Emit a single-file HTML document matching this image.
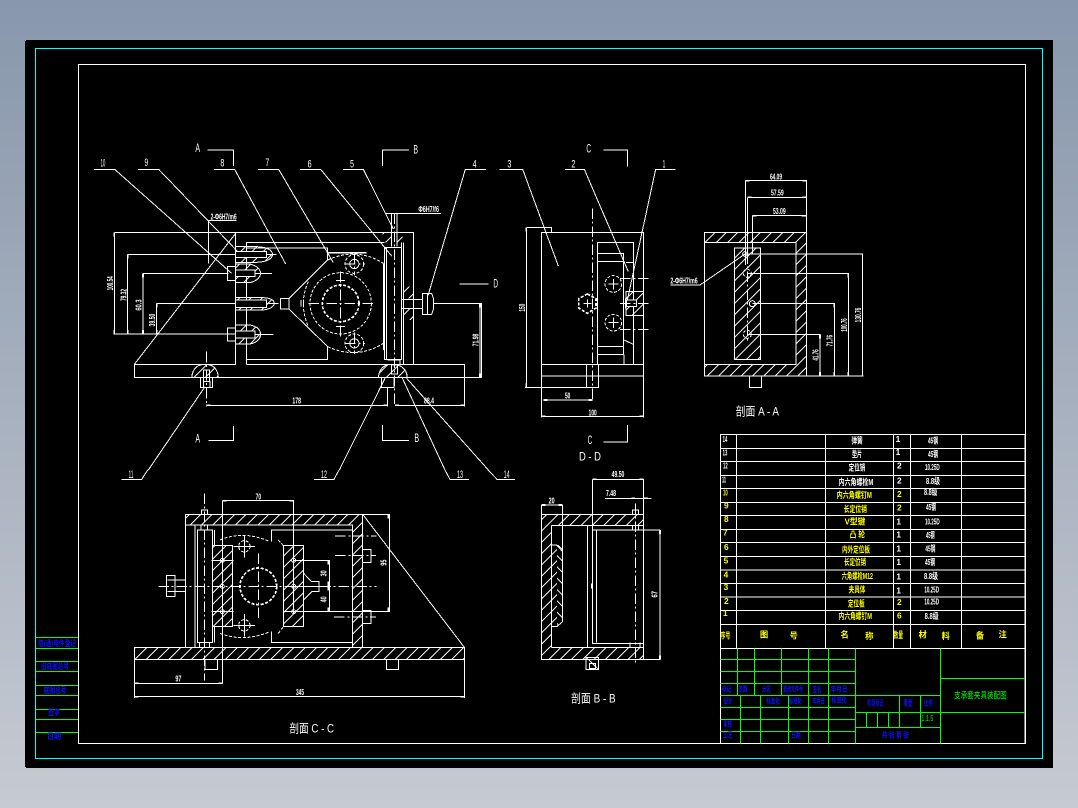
<!DOCTYPE html>
<html lang="zh"><head><meta charset="utf-8"><title>支承套夹具装配图</title>
<style>
html,body{margin:0;padding:0;width:1078px;height:808px;overflow:hidden;background:linear-gradient(#8897ac,#c6cad2)}
svg{position:absolute;left:0;top:0;display:block}
.l{fill:none;stroke:#fff;stroke-width:3;shape-rendering:crispEdges}
.c{stroke-dasharray:32 8 6 8}
.d{stroke-dasharray:9 5}
.k{stroke-width:5}
.h{fill:url(#hatch);stroke:none;shape-rendering:crispEdges}
.m{fill:url(#hatchB);stroke:none;shape-rendering:crispEdges}
text{font-family:"Liberation Sans","Noto Sans CJK SC","WenQuanYi Zen Hei",sans-serif;stroke:none;fill:#fff}
.s{font-size:25px;font-weight:700}
.n{font-size:32px}
.ti{font-size:36px;text-anchor:middle}
.mid{text-anchor:middle}
.y{fill:#ffff00}
.b{fill:#1010ff}
.g{fill:#00ff00}
.w{fill:#fff}
</style></head><body>
<svg width="1078" height="808" viewBox="0 0 1078 808" xmlns="http://www.w3.org/2000/svg">
<defs>
<pattern id="hatch" width="24" height="24" patternUnits="userSpaceOnUse" patternTransform="rotate(-45)"><rect width="24" height="3" fill="#fff"/></pattern>
<pattern id="hatchB" width="24" height="24" patternUnits="userSpaceOnUse" patternTransform="rotate(45)"><rect width="24" height="3" fill="#fff"/></pattern>
</defs>
<rect x="25" y="41" width="1" height="726" fill="#000"/>
<rect x="26" y="40" width="1027" height="728" fill="#000"/>
<rect x="35.5" y="48.5" width="1007" height="710" fill="none" stroke="#00ffff" shape-rendering="crispEdges"/>
<rect x="78.5" y="64.5" width="947" height="679" fill="none" stroke="#fff" shape-rendering="crispEdges"/>
<path d="M36 637.5H78M36 648.5H78M36 661.5H78M36 671.5H78M36 685.5H78M36 695.5H78M36 709.5H78M36 719.5H78M36 732.5H78" stroke="#00ff00" fill="none" shape-rendering="crispEdges"/>
<g font-size="8" style="font-weight:700">
<text class="b mid" x="57" y="646" textLength="38" lengthAdjust="spacingAndGlyphs">借(通)用件登记</text>
<text class="b mid" x="55" y="669" textLength="28" lengthAdjust="spacingAndGlyphs">旧底图总号</text>
<text class="b mid" x="55" y="693" textLength="23" lengthAdjust="spacingAndGlyphs">底图总号</text>
<text class="b mid" x="54" y="715" textLength="12" lengthAdjust="spacingAndGlyphs">签字</text>
<text class="b mid" x="54" y="739" textLength="14" lengthAdjust="spacingAndGlyphs">日期</text>
</g>

<!-- Main view -->
<g transform="translate(90 130) scale(.33333)">
<path class="l" d="M12 118H74L425 430M144 118H206L450 372M372 118H434L587 402M504 118H566L730 398M630 118H692L905 378M759 118H820L910 297M1188 118H1126L1014 497M1230 118H1262M345 770L175 1020M885 745L748 1020M935 740L1065 1020M950 745L1195 1020"/>
<path class="l" d="M352 60H430V108M877 108V60H957M355 932H430V888M877 885V932H957M1108 462H1195"/>
<path class="l" d="M73 307H970V703H1124V742M133 703H437V307M133 703V742H1175M133 703L437 310M469 703H970M469 703V337H883M469 688H713V650M469 354H713V390"/>
<path class="l" d="M73 307V612M70 612H437M113 373V612H113M113 373H530M159 430H415M159 430V612M200 521H435M200 521V612M355 272H440M355 272V400"/>
<path class="l k" d="M73 307V319M73 600V612M113 373V385M113 600V612M159 430V442M159 600V612M200 521V533M200 600V612M1170 521V533M1170 730V742M350 826H362M880 826H893M915 826H927M1112 826H1124M713 368H830"/>
<path class="h" d="M437 350H500Q545 352 548 373Q545 395 500 397H437ZM437 402H480Q510 410 512 430Q510 450 480 458H437ZM437 503H520Q552 505 553 520Q552 535 520 540H437ZM437 585H480Q510 590 512 613Q510 636 480 642H437ZM878 307H905V337H878ZM921 307H938V337H921ZM940 470H970V505H940ZM940 535H970V570H940Z"/>
<path class="l" d="M437 350H500Q545 352 548 373Q545 395 500 397H437M437 402H480Q510 410 512 430Q510 450 480 458H437M437 503H520Q552 505 553 520Q552 535 520 540H437M437 585H480Q510 590 512 613Q510 636 480 642H437"/>
<path d="M437 365H530V382H437ZM437 420H495V440H437ZM437 510H530V532H437ZM437 603H495V624H437Z" fill="#000" stroke="#fff" stroke-width="3" shape-rendering="crispEdges"/>
<path class="l" d="M413 410H437V452H413ZM413 594H437V633H413ZM530 373H560M495 430H546M530 521H566M495 613H550"/>
<path class="l" d="M572 505H597V537H572ZM597 505L713 390M597 537L713 650M633 510V530M640 510V530"/>
<path class="l d" d="M713 390Q800 350 880 400M713 650Q800 690 880 640M655 455Q625 520 655 590"/>
<circle class="l d" cx="752" cy="520" r="92"/>
<circle class="l d k" cx="752" cy="520" r="55"/>
<circle class="l d" cx="793" cy="402" r="28"/><circle class="l" cx="793" cy="402" r="14"/>
<circle class="l d" cx="793" cy="640" r="28"/><circle class="l" cx="793" cy="640" r="14"/>
<path class="l c" d="M655 520H850M752 425V620M765 402H825M793 370V435M765 640H825M793 608V672"/>
<path class="l" d="M738 452H765M738 590H765"/>
<path class="l" d="M883 352H935V688H883ZM881 400V660M890 352V688M905 250V350M921 250V350M935 337V352M940 337V703M885 250H1053"/>
<path class="l c" d="M913 250V830"/>
<path class="l" d="M935 508H998V535H935ZM998 490H1025L1030 505V538L1025 553H998ZM1012 490V553M1030 521H1175V742M1170 521V742"/>
<path class="h" d="M305 742Q310 703 345 703Q382 703 385 742ZM865 742Q870 703 905 703Q948 703 952 742Z"/>
<path class="l" d="M305 742Q310 703 345 703Q382 703 385 742M865 742Q870 703 905 703Q948 703 952 742M332 742H368V773H332ZM340 755H360V773H340ZM340 720H358V755H340ZM875 742H912V773H875ZM905 705H922V732H905ZM893 690H930V705"/>
<path class="l c" d="M349 665V830"/>
<path class="l" d="M349 826H893M915 826H1124M1124 742V830M893 773V830"/>
<g>
<text class="n mid" x="39" y="110" textLength="14" lengthAdjust="spacingAndGlyphs">10</text>
<text class="n mid" x="169" y="108" textLength="11" lengthAdjust="spacingAndGlyphs">9</text>
<text class="n mid" x="397" y="110" textLength="12" lengthAdjust="spacingAndGlyphs">8</text>
<text class="n mid" x="532" y="108" textLength="11" lengthAdjust="spacingAndGlyphs">7</text>
<text class="n mid" x="659" y="112" textLength="12" lengthAdjust="spacingAndGlyphs">6</text>
<text class="n mid" x="786" y="112" textLength="12" lengthAdjust="spacingAndGlyphs">5</text>
<text class="n mid" x="1154" y="112" textLength="12" lengthAdjust="spacingAndGlyphs">4</text>
<text class="ti" x="323" y="66" textLength="14" lengthAdjust="spacingAndGlyphs">A</text>
<text class="ti" x="977" y="70" textLength="14" lengthAdjust="spacingAndGlyphs">B</text>
<text class="ti" x="323" y="938" textLength="14" lengthAdjust="spacingAndGlyphs">A</text>
<text class="ti" x="980" y="936" textLength="14" lengthAdjust="spacingAndGlyphs">B</text>
<text class="ti" x="1217" y="473" textLength="14" lengthAdjust="spacingAndGlyphs">D</text>
<text class="s" x="362" y="268" textLength="78" lengthAdjust="spacingAndGlyphs">2-Φ6H7/m6</text>
<text class="s" x="985" y="246" textLength="62" lengthAdjust="spacingAndGlyphs">Φ6H7/f6</text>
<text class="s" x="620" y="820" text-anchor="middle" textLength="26" lengthAdjust="spacingAndGlyphs">178</text>
<text class="s" x="1017" y="820" text-anchor="middle" textLength="30" lengthAdjust="spacingAndGlyphs">88.4</text>
<text class="s mid" transform="rotate(-90 69 460)" x="69" y="460" textLength="42" lengthAdjust="spacingAndGlyphs">100.54</text>
<text class="s mid" transform="rotate(-90 109 495)" x="109" y="495" textLength="36" lengthAdjust="spacingAndGlyphs">79.32</text>
<text class="s mid" transform="rotate(-90 155 525)" x="155" y="525" textLength="34" lengthAdjust="spacingAndGlyphs">60.3</text>
<text class="s mid" transform="rotate(-90 195 570)" x="195" y="570" textLength="38" lengthAdjust="spacingAndGlyphs">39.50</text>
<text class="s mid" transform="rotate(-90 1165 630)" x="1165" y="630" textLength="38" lengthAdjust="spacingAndGlyphs">71.98</text>
</g>
</g>

<!-- Side view + A-A -->
<g transform="translate(500 130) scale(.33333)">
<path class="l" d="M-2 118H68L175 408M195 118H253L385 425M527 118H467L380 520M310 60H382V110M310 936H382V885"/>
<path class="l" d="M124 307H430V738H124ZM124 703H430M124 738V862M430 738V862M124 859H430M79 292H155V307M79 292V772H296V703M75 772H124M260 703V772M130 810H278"/>
<path class="l k" d="M124 859H136M418 859H430M130 810H142M266 810H278M79 292V304M79 760V772M737 152H749M908 152H920M742 202H754M908 202H920M758 257H770M905 257H920M960 613V625M960 726V738M1003 521V533M1003 726V738M1045 430V442M1045 726V738"/>
<path class="l c" d="M278 235V815"/>
<path class="l" d="M292 703V337H400V703M292 673H370V370H292M292 395H370M292 650H370M400 397H378M400 643L372 630M372 673V703"/>
<path class="h" d="M378 484H430V556H378Z"/>
<path class="l" d="M378 484H430V556H378Z"/>
<path d="M380 510H410V530H380Z" fill="#000" stroke="#fff" stroke-width="3" shape-rendering="crispEdges"/>
<path class="l k" d="M377 505V535"/>
<circle class="l d" cx="340" cy="462" r="25"/><circle class="l d" cx="340" cy="578" r="25"/>
<path class="l c" d="M360 445H445M360 598H445M360 520H445"/>
<path class="l" d="M325 462H355M340 447V478M325 578H355M340 563V594M250 520H275M262 508V532"/>
<path class="l k d" d="M262 492L288 506V534L262 550L236 534V506Z"/>

<path class="h" d="M613 307H920V337H613ZM888 337H920V703H888ZM613 703H920V738H613ZM703 354H782V688H703Z"/>
<path class="l" d="M613 307H920V738H613ZM613 337H888V703H613M703 354H782V688H703ZM748 738H785V773H748Z"/>
<path class="l" d="M737 152H920V738M737 152V405M742 202H920M742 202V370M758 257H920M758 257V370M735 372H1088V738M742 430H1045V738M758 521H1003V738M742 613H960V738M920 738H1090M512 465H600L735 372"/>
<path class="l c" d="M742 370V640"/>
<circle class="l" cx="735" cy="372" r="7"/><circle class="l d" cx="742" cy="430" r="12"/><circle class="l" cx="757" cy="521" r="9"/><circle class="l d" cx="742" cy="613" r="12"/>
<g>
<text class="ti" x="266" y="68" textLength="14" lengthAdjust="spacingAndGlyphs">C</text>
<text class="ti" x="270" y="942" textLength="14" lengthAdjust="spacingAndGlyphs">C</text>
<text class="n mid" x="28" y="112" textLength="12" lengthAdjust="spacingAndGlyphs">3</text>
<text class="n mid" x="220" y="112" textLength="12" lengthAdjust="spacingAndGlyphs">2</text>
<text class="n mid" x="492" y="112" textLength="8" lengthAdjust="spacingAndGlyphs">1</text>
<text class="s mid" x="203" y="805" textLength="16" lengthAdjust="spacingAndGlyphs">50</text>
<text class="s mid" x="278" y="856" textLength="24" lengthAdjust="spacingAndGlyphs">100</text>
<text class="s mid" transform="rotate(-90 75 533)" x="75" y="533" textLength="24" lengthAdjust="spacingAndGlyphs">150</text>
<text class="s mid" x="552" y="461" textLength="82" lengthAdjust="spacingAndGlyphs">2-Φ6H7/m6</text>
<text class="s mid" x="828" y="148" textLength="36" lengthAdjust="spacingAndGlyphs">64.09</text>
<text class="s mid" x="832" y="196" textLength="38" lengthAdjust="spacingAndGlyphs">57.59</text>
<text class="s mid" x="838" y="252" textLength="38" lengthAdjust="spacingAndGlyphs">53.09</text>
<text class="s mid" transform="rotate(-90 956 675)" x="956" y="675" textLength="34" lengthAdjust="spacingAndGlyphs">41.76</text>
<text class="s mid" transform="rotate(-90 998 632)" x="998" y="632" textLength="34" lengthAdjust="spacingAndGlyphs">71.76</text>
<text class="s mid" transform="rotate(-90 1041 585)" x="1041" y="585" textLength="40" lengthAdjust="spacingAndGlyphs">100.76</text>
<text class="s mid" transform="rotate(-90 1083 555)" x="1083" y="555" textLength="44" lengthAdjust="spacingAndGlyphs">130.76</text>
<text class="ti" x="772" y="857" textLength="130" lengthAdjust="spacingAndGlyphs">剖面 A - A</text>
</g>
</g>

<!-- C-C -->
<g transform="translate(120 470) scale(.33333)">
<path class="l" d="M5 28H65L83 0M582 28H642L657 0M975 0L990 28H1047M1104 0L1131 28H1185"/>
<path class="h" d="M196 133H728V165H196ZM697 165H728V532H697ZM43 532H1033V568H43ZM278 227H338V470H278ZM490 227H551V470H490Z"/>
<path class="l" d="M196 133H728V532M196 133V532M196 165H697V532M225 165V532M43 532H1033V568H43ZM728 133L1033 532M43 568V684M1033 568V684M43 680H1033M43 640H307M307 92V640M307 92H521V430M728 133H808V424H521M521 272H628V424M521 349H628"/>
<path class="l k" d="M43 680H55M1021 680H1033M43 640H55M295 640H307M307 92H319M509 92H521M805 133V145M805 412V424M625 272V284M625 412V424M625 335V362"/>
<path class="l" d="M232 180H278V517H232ZM243 165V180M263 165V180M238 517V532M268 517V532M245 120H263V133H245ZM278 227H338V470H278ZM490 227H551V470H490ZM284 180V227M284 470V517"/>
<path class="l c" d="M253 70V632M115 349H770M415 250V445M645 198H770M645 257H768M642 441H768"/>
<path class="l" d="M139 316H165V380H139ZM165 330H196V365H165ZM143 330H165M143 365H165"/>
<circle class="l d k" cx="415" cy="349" r="55"/>
<path class="l d" d="M300 210Q370 180 450 215M300 490Q370 518 450 485"/>
<path class="l d" d="M475 490L490 470M475 210L490 227"/>
<circle class="l d" cx="373" cy="229" r="17"/><circle class="l d" cx="373" cy="466" r="17"/>
<path class="l" d="M340 229H405M373 195V262M340 466H405M373 432V500M454 215V180H697M454 485V517H697M551 310L575 335H597V365H575L551 390M728 238H753V278H728ZM728 422H753V461H728ZM255 568H293V598H255ZM799 568H836V598H799Z"/>
<g class="l"><circle cx="307" cy="271" r="6"/><circle cx="307" cy="349" r="6"/><circle cx="307" cy="425" r="6"/><circle cx="521" cy="271" r="6"/><circle cx="521" cy="349" r="6"/><circle cx="521" cy="425" r="6"/></g>
<path class="l" d="M275 271H340M275 425H340M490 425H521"/>
<text class="n mid" x="33" y="24" textLength="14" lengthAdjust="spacingAndGlyphs">11</text>
<text class="n mid" x="612" y="24" textLength="18" lengthAdjust="spacingAndGlyphs">12</text>
<text class="n mid" x="1020" y="24" textLength="18" lengthAdjust="spacingAndGlyphs">13</text>
<text class="n mid" x="1160" y="24" textLength="18" lengthAdjust="spacingAndGlyphs">14</text>
<text class="s mid" x="415" y="88" textLength="16" lengthAdjust="spacingAndGlyphs">70</text>
<text class="s mid" x="175" y="635" textLength="18" lengthAdjust="spacingAndGlyphs">97</text>
<text class="s mid" x="540" y="675" textLength="24" lengthAdjust="spacingAndGlyphs">345</text>
<text class="s mid" transform="rotate(-90 799 278)" x="799" y="278" textLength="18" lengthAdjust="spacingAndGlyphs">95</text>
<text class="s mid" transform="rotate(-90 620 310)" x="620" y="310" textLength="18" lengthAdjust="spacingAndGlyphs">30</text>
<text class="s mid" transform="rotate(-90 620 388)" x="620" y="388" textLength="18" lengthAdjust="spacingAndGlyphs">40</text>
<text class="ti" x="575" y="787" textLength="134" lengthAdjust="spacingAndGlyphs">剖面 C - C</text>
</g>

<!-- B-B -->
<g transform="translate(520 450) scale(.33333)">
<path class="h" d="M64 193H370V226H95V592H370V628H64Z"/>
<path class="h" d="M95 285H111V530H95Z"/><path class="m" d="M111 285H128V515L111 530Z"/>
<path class="l" d="M64 193H370V628H64ZM95 226H370M95 592H370M95 226V592M95 285H110L128 305V515L110 530H95M128 165V305M64 165H128M64 165V193M202 226V592M217 88V580H370M230 240V577M217 240H420M217 88H370V628M255 145H395M420 240V628H370M337 180H356V193H337ZM337 226H356V240H337ZM330 577V592M360 577V592M198 622H236V658H198ZM208 640H226V655H208ZM198 622L236 658"/>
<path class="l k" d="M64 165H76M116 165H128M217 88H229M358 88H370M420 240V252M420 616V628M335 145H345M372 145H384M215 400V415"/>
<path class="l c" d="M346 160V645"/>
<text class="ti" x="210" y="32" textLength="66" lengthAdjust="spacingAndGlyphs">D - D</text>
<text class="s mid" x="95" y="160" textLength="18" lengthAdjust="spacingAndGlyphs">20</text>
<text class="s mid" x="294" y="81" textLength="38" lengthAdjust="spacingAndGlyphs">49.50</text>
<text class="s mid" x="273" y="138" textLength="30" lengthAdjust="spacingAndGlyphs">7.48</text>
<text class="s mid" transform="rotate(-90 413 433)" x="413" y="433" textLength="20" lengthAdjust="spacingAndGlyphs">67</text>
<text class="ti" x="220" y="757" textLength="134" lengthAdjust="spacingAndGlyphs">剖面 B - B</text>
</g>

<!-- Table -->
<g transform="translate(715 430) scale(.33333)">
<path class="l" d="M17 13H930V940H17ZM17 55H930M17 95H930M17 136H930M17 176H930M17 217H930M17 257H930M17 298H930M17 338H930M17 379H930M17 420H930M17 460H930M17 501H930M17 542H930M17 583H930M17 655H930M65 13V655M331 13V655M535 13V655M586 13V655M739 13V655"/>
<path d="M17 688H421M17 724H421M17 760H421M17 796H421M17 832H421M17 868H421M17 904H421M67 655V796M118 655V796M199 655V796M280 655V796M340 655V796M76 796V940M136 796V940M220 796V940M280 796V940M340 796V940M421 655V940M676 655V940M421 796H676M421 847H930M676 745H930M421 892H676M553 796V892M616 796V892M454 847V892M487 847V892M520 847V892" fill="none" stroke="#00ff00" stroke-width="3" shape-rendering="crispEdges"/>
<g font-size="25" font-weight="700" text-anchor="middle">
<text class="w" x="426" y="40" textLength="34" lengthAdjust="spacingAndGlyphs">弹簧</text>
<text class="w" x="426" y="81" textLength="30" lengthAdjust="spacingAndGlyphs">垫片</text>
<text class="w" x="426" y="122" textLength="50" lengthAdjust="spacingAndGlyphs">定位销</text>
<text class="w" x="423" y="165" textLength="104" lengthAdjust="spacingAndGlyphs">内六角螺栓M</text>
<text class="y" x="418" y="204" textLength="106" lengthAdjust="spacingAndGlyphs">内六角螺钉M</text>
<text class="y" x="421" y="246" textLength="70" lengthAdjust="spacingAndGlyphs">长定位销</text>
<text class="y" x="420" y="284" textLength="62" lengthAdjust="spacingAndGlyphs">V型键</text>
<text class="y" x="427" y="323" textLength="46" lengthAdjust="spacingAndGlyphs">凸 轮</text>
<text class="y" x="423" y="367" textLength="84" lengthAdjust="spacingAndGlyphs">内外定位板</text>
<text class="y" x="420" y="405" textLength="66" lengthAdjust="spacingAndGlyphs">长定位销</text>
<text class="y" x="427" y="447" textLength="94" lengthAdjust="spacingAndGlyphs">六角螺栓M12</text>
<text class="y" x="426" y="488" textLength="50" lengthAdjust="spacingAndGlyphs">夹具体</text>
<text class="y" x="424" y="529" textLength="50" lengthAdjust="spacingAndGlyphs">定位板</text>
<text class="y" x="421" y="567" textLength="100" lengthAdjust="spacingAndGlyphs">内六角螺钉M</text>
<text class="w" x="654" y="41" textLength="30" lengthAdjust="spacingAndGlyphs">45钢</text>
<text class="w" x="654" y="81" textLength="30" lengthAdjust="spacingAndGlyphs">45钢</text>
<text class="w" x="652" y="120" textLength="44" lengthAdjust="spacingAndGlyphs">10.25D</text>
<text class="w" x="654" y="162" textLength="42" lengthAdjust="spacingAndGlyphs">8.8级</text>
<text class="w" x="647" y="195" textLength="40" lengthAdjust="spacingAndGlyphs">8.8级</text>
<text class="w" x="648" y="240" textLength="30" lengthAdjust="spacingAndGlyphs">45钢</text>
<text class="w" x="652" y="284" textLength="44" lengthAdjust="spacingAndGlyphs">10.25D</text>
<text class="w" x="646" y="324" textLength="26" lengthAdjust="spacingAndGlyphs">45钢</text>
<text class="w" x="646" y="364" textLength="30" lengthAdjust="spacingAndGlyphs">45钢</text>
<text class="w" x="645" y="405" textLength="30" lengthAdjust="spacingAndGlyphs">45钢</text>
<text class="w" x="648" y="447" textLength="42" lengthAdjust="spacingAndGlyphs">8.8级</text>
<text class="w" x="650" y="488" textLength="44" lengthAdjust="spacingAndGlyphs">10.25D</text>
<text class="w" x="650" y="524" textLength="44" lengthAdjust="spacingAndGlyphs">10.25D</text>
<text class="w" x="650" y="567" textLength="42" lengthAdjust="spacingAndGlyphs">8.8级</text>
<g font-family="Liberation Sans">
<text class="w" x="30" y="36" textLength="14" lengthAdjust="spacingAndGlyphs">14</text><text class="w" x="30" y="76" textLength="14" lengthAdjust="spacingAndGlyphs">13</text><text class="w" x="31" y="116" textLength="14" lengthAdjust="spacingAndGlyphs">12</text><text class="w" x="27" y="158" textLength="12" lengthAdjust="spacingAndGlyphs">11</text>
<text class="y" x="31" y="197" textLength="14" lengthAdjust="spacingAndGlyphs">10</text><text class="y" x="34" y="236">9</text><text class="y" x="34" y="276">8</text><text class="y" x="31" y="316">7</text><text class="y" x="34" y="360">6</text><text class="y" x="33" y="400">5</text><text class="y" x="33" y="442">4</text><text class="y" x="33" y="480">3</text><text class="y" x="34" y="522">2</text><text class="y" x="31" y="558">1</text>
<text class="w" x="549" y="36">1</text><text class="w" x="549" y="75">1</text><text class="w" x="553" y="116">2</text><text class="w" x="553" y="160">2</text><text class="y" x="553" y="201">2</text><text class="y" x="553" y="242">2</text><text class="w" x="551" y="284">1</text><text class="w" x="551" y="323">1</text><text class="w" x="551" y="364">1</text><text class="w" x="551" y="405">1</text><text class="w" x="551" y="448">1</text><text class="w" x="551" y="490">1</text><text class="y" x="553" y="525">2</text><text class="y" x="553" y="566">6</text>
</g>
<text class="y" x="31" y="625" textLength="30" lengthAdjust="spacingAndGlyphs">序号</text>
<text class="y" x="147" y="622">图</text><text class="y" x="236" y="625">号</text>
<text class="y" x="389" y="622">名</text><text class="y" x="463" y="627">称</text>
<text class="y" x="550" y="624" textLength="28" lengthAdjust="spacingAndGlyphs">数量</text>
<text class="y" x="623" y="622">材</text><text class="y" x="692" y="627">料</text>
<text class="y" x="795" y="625">备</text><text class="y" x="863" y="622">注</text>
<g font-size="22">
<text class="b" x="35" y="784" textLength="28" lengthAdjust="spacingAndGlyphs">标记</text>
<text class="b" x="84" y="784" textLength="28" lengthAdjust="spacingAndGlyphs">处数</text>
<text class="b" x="154" y="784" textLength="26" lengthAdjust="spacingAndGlyphs">分区</text>
<text class="b" x="234" y="784" textLength="60" lengthAdjust="spacingAndGlyphs">更改文件号</text>
<text class="b" x="306" y="786" textLength="26" lengthAdjust="spacingAndGlyphs">签名</text>
<text class="b" x="372" y="784" textLength="50" lengthAdjust="spacingAndGlyphs">年月日</text>
<text class="b" x="39" y="820" textLength="26" lengthAdjust="spacingAndGlyphs">设计</text>
<text class="b" x="174" y="820" textLength="40" lengthAdjust="spacingAndGlyphs">标准化</text>
<text class="b" x="241" y="820" textLength="38" lengthAdjust="spacingAndGlyphs">标准化</text>
<text class="b" x="311" y="820" textLength="36" lengthAdjust="spacingAndGlyphs">年月日</text>
<text class="b" x="372" y="818" textLength="46" lengthAdjust="spacingAndGlyphs">标准化</text>
<text class="b" x="38" y="890" textLength="26" lengthAdjust="spacingAndGlyphs">审核</text>
<text class="b" x="38" y="922" textLength="30" lengthAdjust="spacingAndGlyphs">工艺</text>
<text class="b" x="243" y="922" textLength="28" lengthAdjust="spacingAndGlyphs">日期</text>
<text class="b" x="481" y="826" textLength="48" lengthAdjust="spacingAndGlyphs">阶段标记</text>
<text class="b" x="579" y="826" textLength="26" lengthAdjust="spacingAndGlyphs">重量</text>
<text class="b" x="640" y="826" textLength="26" lengthAdjust="spacingAndGlyphs">比例</text>
<text class="b" x="541" y="922" textLength="80" lengthAdjust="spacingAndGlyphs">共 张 第 张</text>
</g>
<text class="g" x="637" y="873" font-size="24" font-weight="400" textLength="36" lengthAdjust="spacingAndGlyphs">1:1.5</text>
<text class="g" x="796" y="805" font-size="28" font-weight="400" textLength="158" lengthAdjust="spacingAndGlyphs">支承套夹具装配图</text>
</g>
</g>
</svg>
</body></html>
